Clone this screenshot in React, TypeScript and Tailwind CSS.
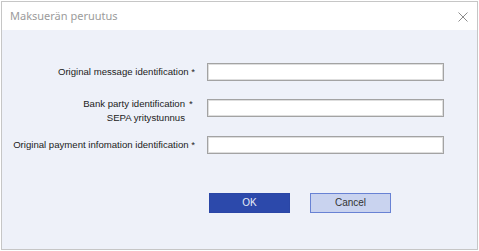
import React from "react";

const labelFont = { fontFamily: '"Liberation Sans", Arial, sans-serif' };

const Field: React.FC = () => (
  <div className="ml-[12px] h-[18px] w-[237px] border border-[#a3a3a3] bg-white shadow-[inset_0_0_0_1px_#dedede]" />
);

const App: React.FC = () => {
  return (
    <div className="h-[251px] w-[479px] bg-white pl-[1px] pt-[1px]">
      <div className="flex h-[249px] w-[477px] flex-col border border-[#c6c6c6] bg-[#eef1f9]">
        {/* Title bar */}
        <div className="flex h-[28px] shrink-0 items-center justify-between bg-white pl-[8px] pr-[8px]">
          <span
            className="text-[11px] text-[#9b9b9b]"
            style={{ fontFamily: '"Noto Sans", "Open Sans", sans-serif' }}
          >
            Maksuerän peruutus
          </span>
          <svg width="10" height="10" viewBox="0 0 10 10" className="mr-[1px] mt-[1px]">
            <path d="M0.5 0.5 L9.5 9.5 M9.5 0.5 L0.5 9.5" stroke="#8c8c8c" strokeWidth="1" fill="none" />
          </svg>
        </div>

        {/* Form */}
        <div className="flex flex-col pt-[33px] text-[9.6px] leading-[14px] text-[#222]" style={labelFont}>
          <div className="flex h-[18px] items-center">
            <div className="w-[193px] text-right">Original message identification *</div>
            <Field />
          </div>

          <div className="mt-[18px] flex h-[18px] items-start">
            <div className="-mt-[2px] flex w-[193px] justify-end">
              <div className="text-right">
                <div>Bank party identification</div>
                <div>SEPA yritystunnus</div>
              </div>
              <div className="ml-[4px] w-[6px]">*</div>
            </div>
            <Field />
          </div>

          <div className="mt-[19px] flex h-[18px] items-center">
            <div className="w-[193px] text-right">Original payment infomation identification *</div>
            <Field />
          </div>

          {/* Buttons */}
          <div className="mt-[39px] flex pl-[207px] text-[10px]">
            <button className="h-[20px] w-[81px] border border-[#2a46a6] bg-[#2c49ab] text-[#e8ecf8]">OK</button>
            <button className="ml-[20px] h-[20px] w-[81px] border border-[#6882d4] bg-[#c9d3ef] text-[#333]">
              Cancel
            </button>
          </div>
        </div>
      </div>
    </div>
  );
};

export default App;
